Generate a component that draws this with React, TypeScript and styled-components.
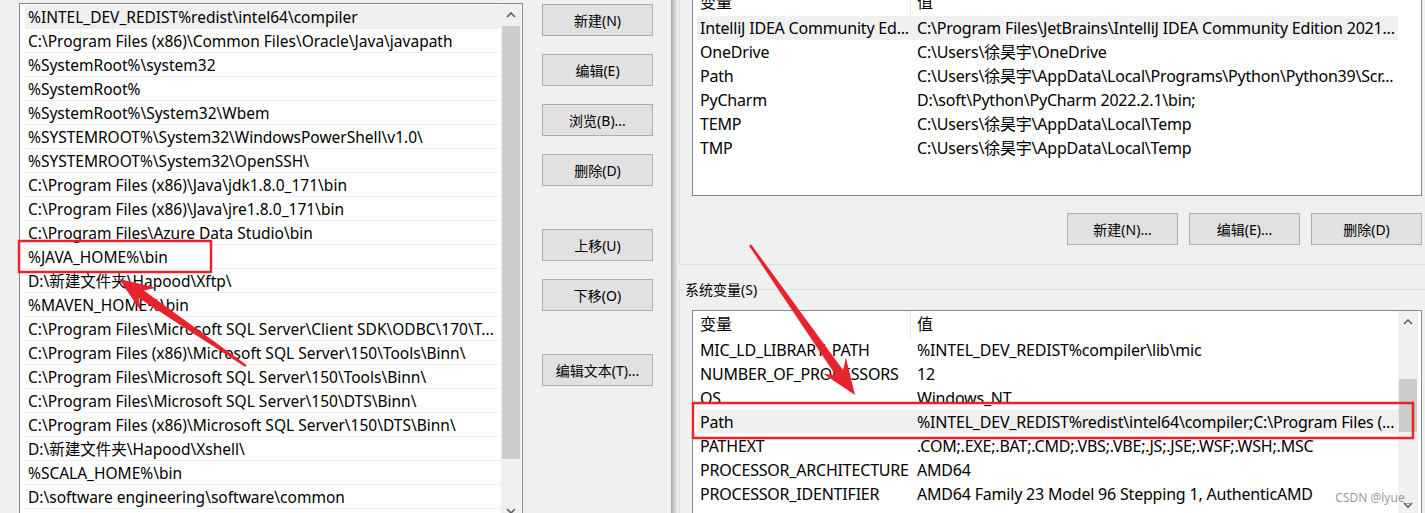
import React from "react";
import styled, { createGlobalStyle } from "styled-components";

const FONT = `"Noto Sans", "Noto Sans CJK SC", sans-serif`;

const GlobalStyle = createGlobalStyle`
  html, body {
    margin: 0;
    padding: 0;
    background: #f0f0f0;
  }
  body {
    width: 1425px;
    height: 513px;
    overflow: hidden;
    font-family: ${FONT};
    color: #000;
  }
`;

const pathEntries = [
  "%INTEL_DEV_REDIST%redist\\intel64\\compiler",
  "C:\\Program Files (x86)\\Common Files\\Oracle\\Java\\javapath",
  "%SystemRoot%\\system32",
  "%SystemRoot%",
  "%SystemRoot%\\System32\\Wbem",
  "%SYSTEMROOT%\\System32\\WindowsPowerShell\\v1.0\\",
  "%SYSTEMROOT%\\System32\\OpenSSH\\",
  "C:\\Program Files (x86)\\Java\\jdk1.8.0_171\\bin",
  "C:\\Program Files (x86)\\Java\\jre1.8.0_171\\bin",
  "C:\\Program Files\\Azure Data Studio\\bin",
  "%JAVA_HOME%\\bin",
  "D:\\新建文件夹\\Hapood\\Xftp\\",
  "%MAVEN_HOME%\\bin",
  "C:\\Program Files\\Microsoft SQL Server\\Client SDK\\ODBC\\170\\T...",
  "C:\\Program Files (x86)\\Microsoft SQL Server\\150\\Tools\\Binn\\",
  "C:\\Program Files\\Microsoft SQL Server\\150\\Tools\\Binn\\",
  "C:\\Program Files\\Microsoft SQL Server\\150\\DTS\\Binn\\",
  "C:\\Program Files (x86)\\Microsoft SQL Server\\150\\DTS\\Binn\\",
  "D:\\新建文件夹\\Hapood\\Xshell\\",
  "%SCALA_HOME%\\bin",
  "D:\\software engineering\\software\\common",
];

const pathButtons = [
  { label: "新建(N)" },
  { label: "编辑(E)" },
  { label: "浏览(B)..." },
  { label: "删除(D)" },
  { label: "上移(U)", spaced: true },
  { label: "下移(O)" },
  { label: "编辑文本(T)...", spaced: true },
];

const userVars = [
  ["IntelliJ IDEA Community Ed...", "C:\\Program Files\\JetBrains\\IntelliJ IDEA Community Edition 2021..."],
  ["OneDrive", "C:\\Users\\徐昊宇\\OneDrive"],
  ["Path", "C:\\Users\\徐昊宇\\AppData\\Local\\Programs\\Python\\Python39\\Scr..."],
  ["PyCharm", "D:\\soft\\Python\\PyCharm 2022.2.1\\bin;"],
  ["TEMP", "C:\\Users\\徐昊宇\\AppData\\Local\\Temp"],
  ["TMP", "C:\\Users\\徐昊宇\\AppData\\Local\\Temp"],
];

const systemVars = [
  ["MIC_LD_LIBRARY_PATH", "%INTEL_DEV_REDIST%compiler\\lib\\mic"],
  ["NUMBER_OF_PROCESSORS", "12"],
  ["OS", "Windows_NT"],
  ["Path", "%INTEL_DEV_REDIST%redist\\intel64\\compiler;C:\\Program Files (..."],
  ["PATHEXT", ".COM;.EXE;.BAT;.CMD;.VBS;.VBE;.JS;.JSE;.WSF;.WSH;.MSC"],
  ["PROCESSOR_ARCHITECTURE", "AMD64"],
  ["PROCESSOR_IDENTIFIER", "AMD64 Family 23 Model 96 Stepping 1, AuthenticAMD"],
];

/* ---------- page ---------- */

const Screen = styled.div`
  position: relative;
  display: flex;
  width: 1425px;
  height: 513px;
  overflow: hidden;
  background: #f0f0f0;
`;

const LeftPane = styled.div`
  width: 671px;
  flex-shrink: 0;
  box-sizing: border-box;
  display: flex;
  align-items: flex-start;
  gap: 19px;
  padding: 3px 0 0 19px;
`;

const WindowEdge = styled.div`
  width: 6px;
  flex-shrink: 0;
  background: linear-gradient(to right, #a3a3a3, #c8c8c8 40%, #e2e2e2);
`;

const RightPane = styled.div`
  flex: 1;
  min-width: 0;
  padding-left: 2px;
  display: flex;
  flex-direction: column;
`;

/* ---------- list box ---------- */

const ListBox = styled.div`
  width: 504px;
  height: 520px;
  box-sizing: border-box;
  flex-shrink: 0;
  display: flex;
  border: 1px solid #828790;
  background: #fff;
`;

const ListRows = styled.div`
  flex: 1;
  min-width: 0;
  padding: 1px 0 0 5px;
`;

const ListRow = styled.div<{ $selected?: boolean }>`
  height: 24px;
  box-sizing: border-box;
  padding-left: 3px;
  border-bottom: 1px solid #f0f0f0;
  background: ${(p) => (p.$selected ? "#f0f0f0" : "#fff")};
  font-size: 15.5px;
  line-height: 24px;
  white-space: nowrap;
  overflow: hidden;
`;

/* ---------- scrollbar ---------- */

const ScrollTrack = styled.div<{ $width: number; $blank?: boolean }>`
  width: ${(p) => p.$width}px;
  flex-shrink: 0;
  margin-right: 1px;
  display: flex;
  flex-direction: column;
  background: ${(p) => (p.$blank ? "#fff" : "#f0f0f0")};
`;

const ScrollArrow = styled.div`
  height: 22px;
  flex-shrink: 0;
  display: flex;
  align-items: center;
  justify-content: center;
`;

const ScrollBody = styled.div`
  flex: 1;
`;

const Thumb = styled.div<{ $offset: number; $size: number }>`
  margin: ${(p) => p.$offset}px 1px 0;
  height: ${(p) => p.$size}px;
  background: #cdcdcd;
`;

function Chevron({ down }: { down?: boolean }) {
  return (
    <svg width="10" height="6" viewBox="0 0 10 6">
      <polyline
        points={down ? "1,1 5,5 9,1" : "1,5 5,1 9,5"}
        fill="none"
        stroke="#606060"
        strokeWidth="1.6"
      />
    </svg>
  );
}

function Scrollbar({ offset, size }: { offset: number; size: number }) {
  return (
    <ScrollTrack $width={20}>
      <ScrollArrow>
        <Chevron />
      </ScrollArrow>
      <ScrollBody>
        <Thumb $offset={offset} $size={size} />
      </ScrollBody>
      <ScrollArrow>
        <Chevron down />
      </ScrollArrow>
    </ScrollTrack>
  );
}

/* ---------- buttons ---------- */

const ButtonColumn = styled.div`
  display: flex;
  flex-direction: column;
  gap: 18px;
  padding-top: 1px;
`;

const WinButton = styled.button<{ $spaced?: boolean }>`
  width: 111px;
  height: 32px;
  margin-top: ${(p) => (p.$spaced ? "25px" : "0")};
  padding: 0;
  background: #e1e1e1;
  border: 1px solid #adadad;
  border-radius: 0;
  font-family: ${FONT};
  font-size: 14px;
  color: #000;
  white-space: nowrap;
`;

const ButtonRow = styled.div`
  width: 730px;
  display: flex;
  justify-content: flex-end;
  gap: 11px;
  margin-top: 17px;
`;

/* ---------- groups ---------- */

const UserGroup = styled.div`
  margin-top: -12px;
  padding: 0 0 19px 12px;
  border-left: 1px solid #dcdcdc;
  border-bottom: 1px solid #dcdcdc;
`;

const SystemGroup = styled.div`
  margin-top: 14px;
  border-left: 1px solid #dcdcdc;
`;

const GroupTitle = styled.div`
  height: 20px;
  display: flex;
  align-items: center;
  font-size: 14px;
  white-space: nowrap;

  &::before {
    content: "";
    width: 5px;
    border-top: 1px solid #dcdcdc;
  }
  &::after {
    content: "";
    flex: 1;
    margin-left: 2px;
    border-top: 1px solid #dcdcdc;
  }
`;

/* ---------- tables ---------- */

const Table = styled.div<{ $height: number }>`
  width: 730px;
  height: ${(p) => p.$height}px;
  box-sizing: border-box;
  display: flex;
  border: 1px solid #828790;
  background: #fff;
  overflow: hidden;
`;

const SystemTable = styled(Table)`
  margin: 11px 0 0 12px;
`;

const TableBody = styled.div`
  width: 701px;
  flex-shrink: 0;
  margin-left: 4px;
`;

const HeaderRow = styled.div`
  height: 27px;
  display: grid;
  grid-template-columns: 214px 1fr;
  font-size: 16px;
  line-height: 27px;
`;

const HeaderCell = styled.div<{ $first?: boolean }>`
  padding-left: ${(p) => (p.$first ? "3px" : "6px")};
  border-right: ${(p) => (p.$first ? "1px solid #e5e5e5" : "none")};
`;

const VarRow = styled.div<{ $selected?: boolean }>`
  height: 24px;
  display: grid;
  grid-template-columns: 214px 1fr;
  background: ${(p) => (p.$selected ? "#f0f0f0" : "transparent")};
  font-size: 16px;
  line-height: 24px;
  letter-spacing: -0.2px;
`;

const VarCell = styled.div<{ $first?: boolean }>`
  padding-left: ${(p) => (p.$first ? "3px" : "6px")};
  white-space: nowrap;
  overflow: hidden;
`;

function VarTable({
  rows,
  selected,
  children,
}: {
  rows: string[][];
  selected: string;
  children?: React.ReactNode;
}) {
  return (
    <>
      <TableBody>
        <HeaderRow>
          <HeaderCell $first>变量</HeaderCell>
          <HeaderCell>值</HeaderCell>
        </HeaderRow>
        {rows.map(([name, value]) => (
          <VarRow key={name} $selected={name === selected}>
            <VarCell $first>{name}</VarCell>
            <VarCell>{value}</VarCell>
          </VarRow>
        ))}
      </TableBody>
      {children}
    </>
  );
}

/* ---------- annotations ---------- */

const Annotations = styled.svg`
  position: absolute;
  left: 0;
  top: 0;
  pointer-events: none;
`;

const Watermark = styled.div`
  position: absolute;
  right: 15px;
  bottom: 7px;
  font-family: ${FONT};
  font-size: 12px;
  color: rgba(120, 120, 120, 0.75);
`;

function arrowPoints(tx: number, ty: number, px: number, py: number) {
  const dx = px - tx;
  const dy = py - ty;
  const len = Math.hypot(dx, dy);
  const ux = dx / len;
  const uy = dy / len;
  const nx = -uy;
  const ny = ux;
  const headLen = 36;
  const headHalf = 14;
  const neck = 27;
  const tailHalf = 1.2;
  const neckHalf = 4.5;
  const bx = px - ux * headLen;
  const by = py - uy * headLen;
  const kx = px - ux * neck;
  const ky = py - uy * neck;
  const pts = [
    [tx + nx * tailHalf, ty + ny * tailHalf],
    [kx + nx * neckHalf, ky + ny * neckHalf],
    [bx + nx * headHalf, by + ny * headHalf],
    [px, py],
    [bx - nx * headHalf, by - ny * headHalf],
    [kx - nx * neckHalf, ky - ny * neckHalf],
    [tx - nx * tailHalf, ty - ny * tailHalf],
  ];
  return pts.map(([x, y]) => `${x.toFixed(1)},${y.toFixed(1)}`).join(" ");
}

const RED = "#e8232b";

export default function App() {
  return (
    <>
      <GlobalStyle />
      <Screen>
        <LeftPane>
          <ListBox>
            <ListRows>
              {pathEntries.map((entry, i) => (
                <ListRow key={entry} $selected={i === 0}>
                  {entry}
                </ListRow>
              ))}
            </ListRows>
            <Scrollbar offset={0} size={433} />
          </ListBox>
          <ButtonColumn>
            {pathButtons.map((b) => (
              <WinButton key={b.label} $spaced={b.spaced}>
                {b.label}
              </WinButton>
            ))}
          </ButtonColumn>
        </LeftPane>

        <WindowEdge />

        <RightPane>
          <UserGroup>
            <Table $height={208}>
              <VarTable rows={userVars} selected="IntelliJ IDEA Community Ed...">
                <ScrollTrack $width={20} $blank />
              </VarTable>
            </Table>
            <ButtonRow>
              <WinButton>新建(N)...</WinButton>
              <WinButton>编辑(E)...</WinButton>
              <WinButton>删除(D)</WinButton>
            </ButtonRow>
          </UserGroup>

          <SystemGroup>
            <GroupTitle>系统变量(S)</GroupTitle>
            <SystemTable $height={207}>
              <VarTable rows={systemVars} selected="Path">
                <Scrollbar offset={46} size={53} />
              </VarTable>
            </SystemTable>
          </SystemGroup>
        </RightPane>

        <Annotations width="1425" height="513" viewBox="0 0 1425 513">
          <rect x="19" y="241" width="192" height="31" fill="none" stroke={RED} strokeWidth="2.5" />
          <rect x="693" y="403" width="720" height="35" fill="none" stroke={RED} strokeWidth="2.5" />
          <polygon points={arrowPoints(246, 366, 119, 279)} fill={RED} />
          <polygon points={arrowPoints(750, 245, 855, 395)} fill={RED} />
        </Annotations>
        <Watermark>CSDN @lyue_</Watermark>
      </Screen>
    </>
  );
}
